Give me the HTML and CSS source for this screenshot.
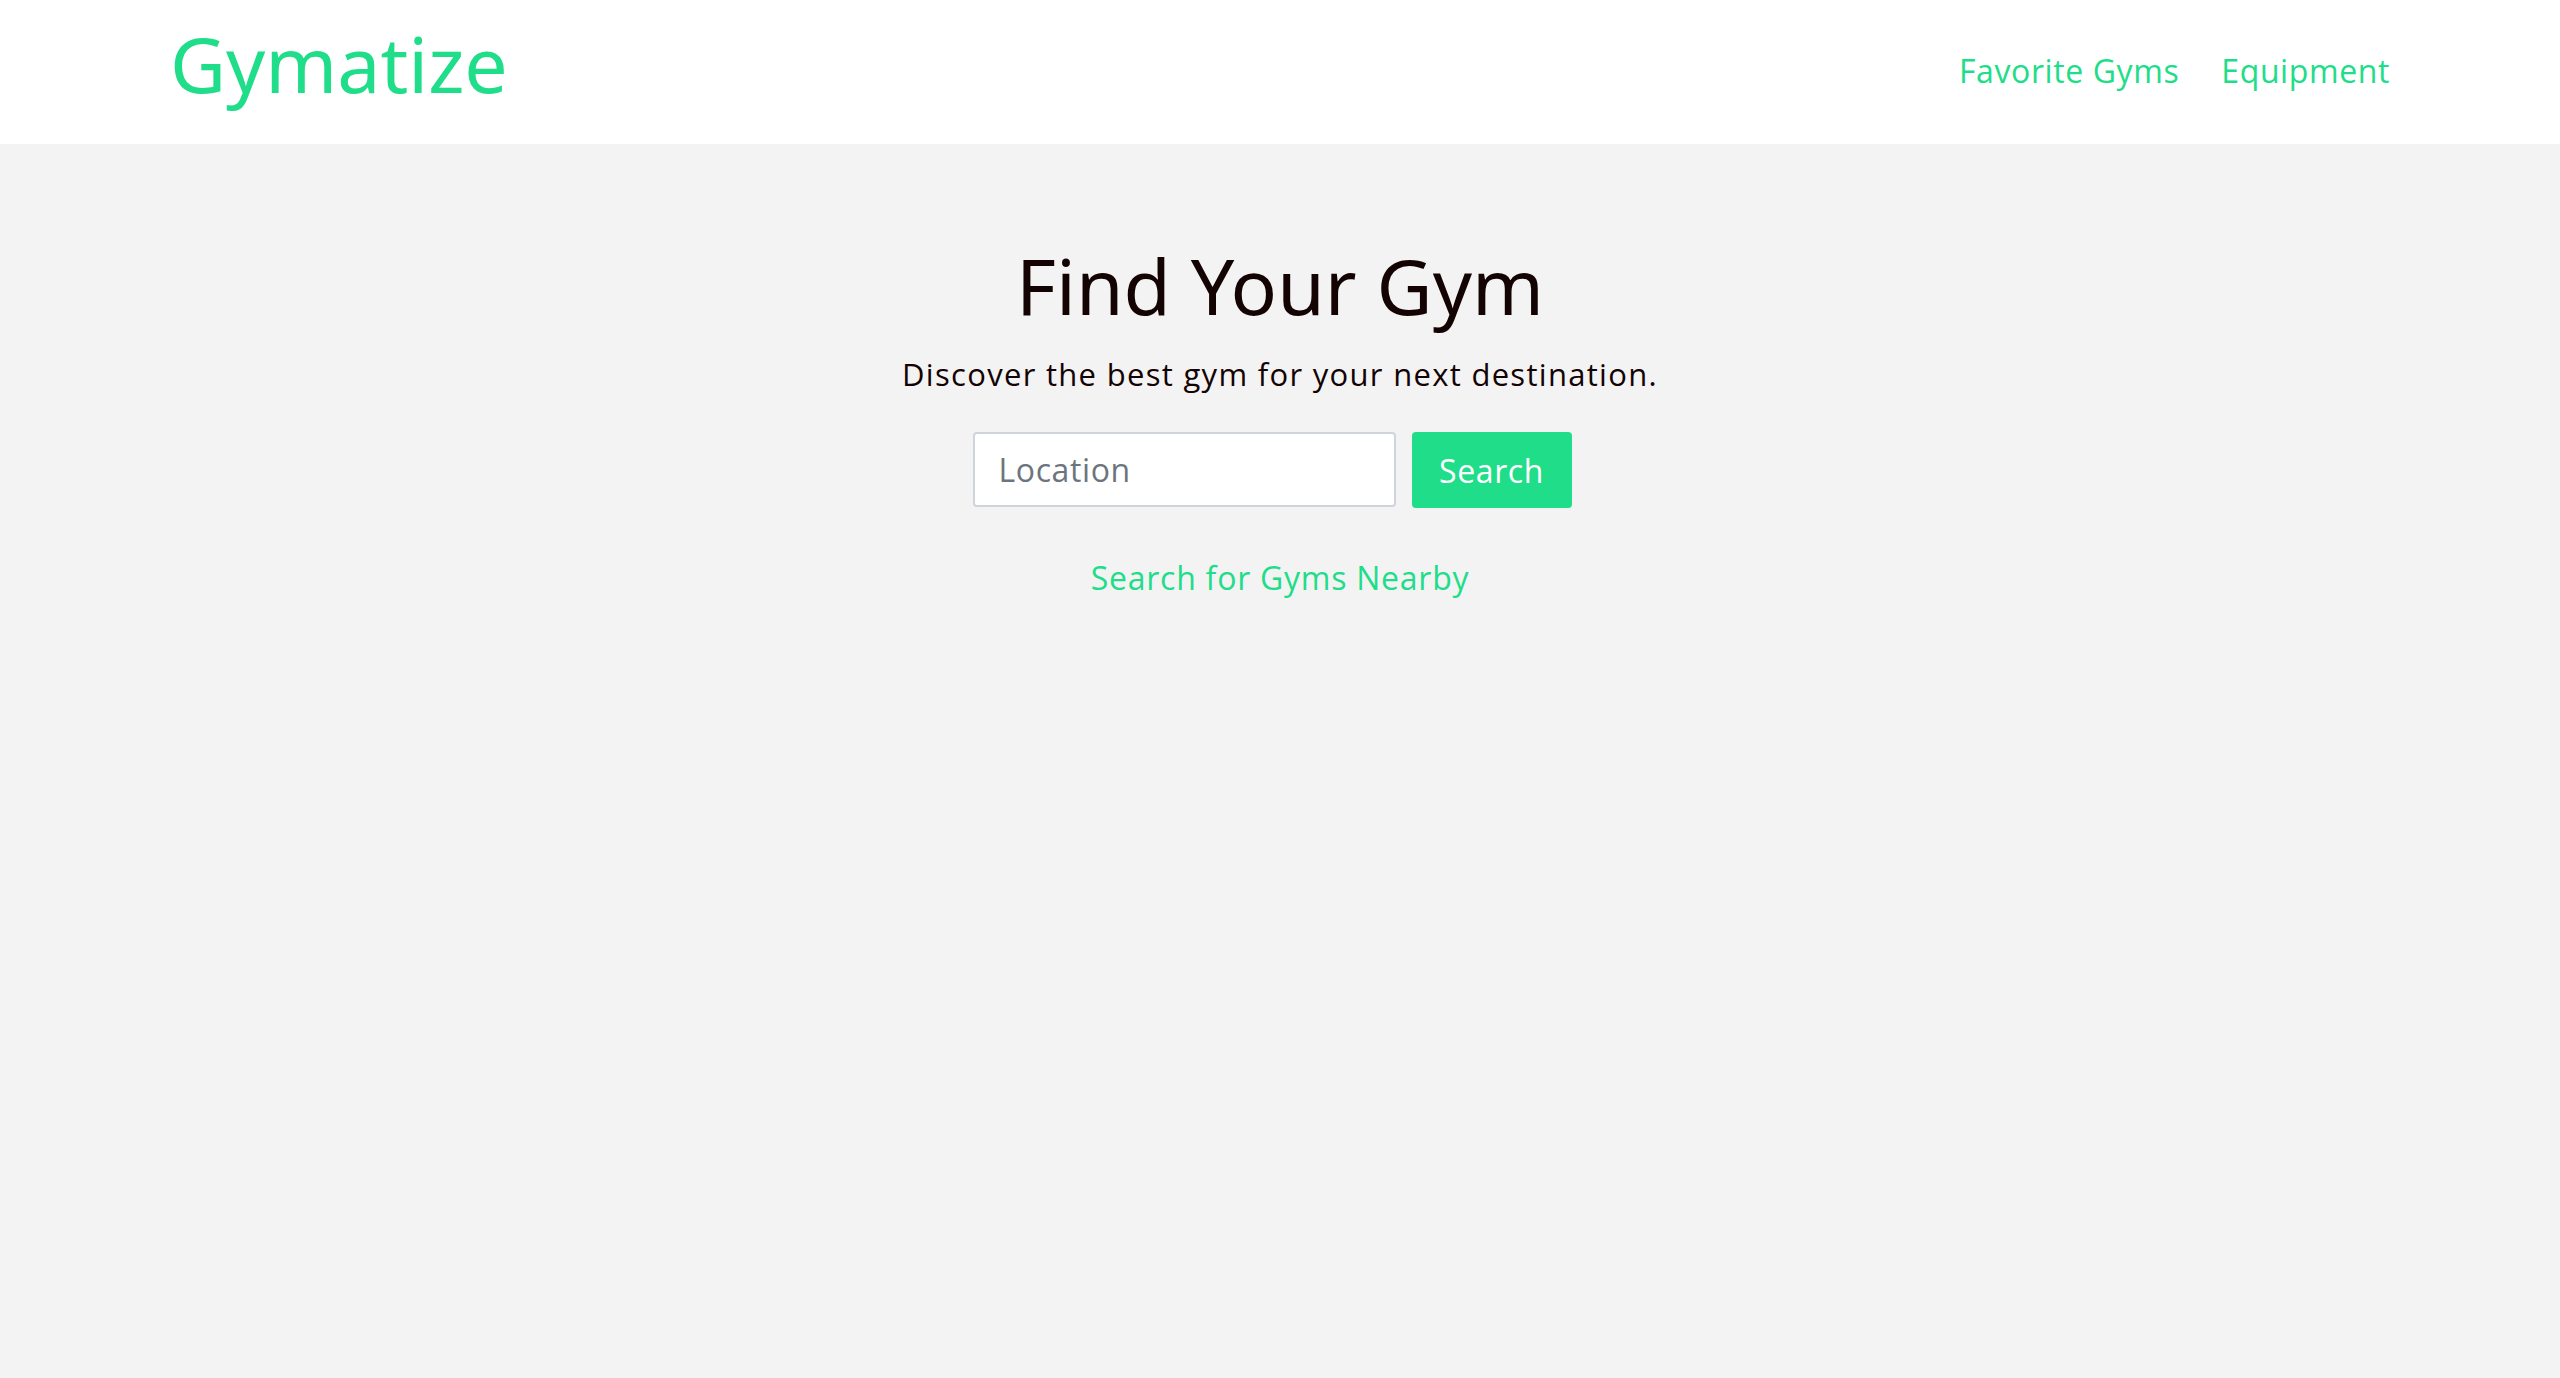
FILE: index.html
```html
<!DOCTYPE html>
<html lang="en">
<head>
<meta charset="utf-8">
<title>Gymatize</title>
<link rel="stylesheet" href="styles.css">
</head>
<body>
<header class="topbar">
  <a class="brand" href="#">Gymatize</a>
  <nav class="nav">
    <a class="nav-link" href="#">Favorite Gyms</a>
    <a class="nav-link" href="#">Equipment</a>
  </nav>
</header>
<main class="hero">
  <h1 class="hero-title">Find Your Gym</h1>
  <p class="hero-sub">Discover the best gym for your next destination.</p>
  <form class="search-form">
    <input class="search-input" type="text" placeholder="Location">
    <button class="search-btn" type="button">Search</button>
  </form>
  <a class="nearby-link" href="#">Search for Gyms Nearby</a>
</main>
</body>
</html>
```
FILE: styles.css
```css
html, body {
  margin: 0;
  padding: 0;
}
body {
  background: #f3f3f3;
  font-family: "Open Sans", "Noto Sans", sans-serif;
  color: #130303;
  min-height: 100vh;
}
a {
  text-decoration: none;
}
.topbar {
  background: #ffffff;
  height: 144px;
  box-sizing: border-box;
  display: flex;
  justify-content: space-between;
  align-items: center;
  padding: 0 170px 0 170px;
}
.brand {
  font-family: "Noto Sans", sans-serif;
  font-size: 77px;
  line-height: 1;
  color: #20dd89;
  margin-top: -18px;
}
.nav {
  display: flex;
  gap: 42px;
  margin-top: -4px;
}
.nav-link {
  font-family: "Open Sans", sans-serif;
  font-size: 32px;
  letter-spacing: 0.6px;
  color: #20dd89;
}
.hero {
  display: flex;
  flex-direction: column;
  align-items: center;
  padding-top: 94px;
}
.hero-title {
  font-family: "Noto Sans", sans-serif;
  font-weight: 400;
  font-size: 77px;
  line-height: 96px;
  margin: 0;
  color: #130303;
}
.hero-sub {
  font-size: 31px;
  line-height: 40px;
  letter-spacing: 1.3px;
  margin: 20px 0 0;
  color: #130303;
}
.search-form {
  display: flex;
  gap: 16px;
  margin-top: 38px;
  margin-left: -16px;
}
.search-input {
  width: 423px;
  height: 75px;
  box-sizing: border-box;
  border: 2px solid #ced4da;
  border-radius: 4px;
  background: #fff;
  padding: 0 24px;
  font-family: "Open Sans", sans-serif;
  font-size: 32px;
  letter-spacing: 0.6px;
  color: #495057;
  outline: none;
}
.search-input::placeholder {
  color: #6c757d;
}
.search-btn {
  width: 160px;
  height: 76px;
  border: none;
  border-radius: 4px;
  background: #20dd89;
  color: #ffffff;
  font-family: "Open Sans", sans-serif;
  font-size: 32px;
  letter-spacing: 0.6px;
  padding: 0;
}
.nearby-link {
  margin-top: 50px;
  font-size: 32px;
  line-height: 40px;
  letter-spacing: 0.75px;
  color: #20dd89;
}
```
